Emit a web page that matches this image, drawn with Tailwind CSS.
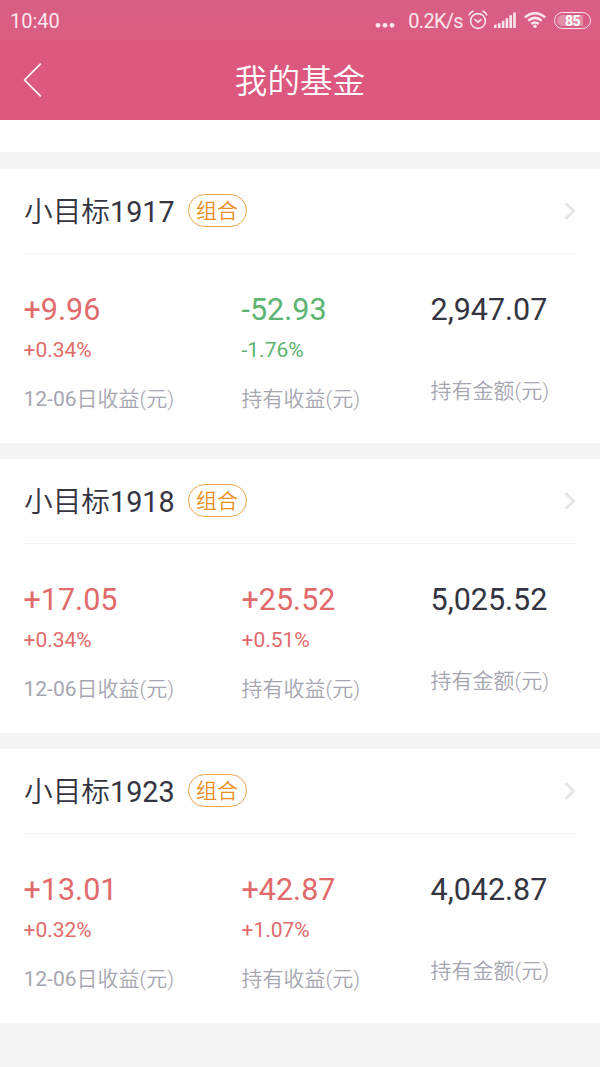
<!DOCTYPE html>
<html lang="zh-CN">
<head>
    <meta charset="UTF-8">
    <meta name="viewport" content="width=device-width, initial-scale=1.0">
    <title>我的基金</title>
    <script src="https://cdn.jsdelivr.net/npm/@tailwindcss/browser@4"></script>
</head>
<body class="bg-[#f5f5f5] h-[1067px] overflow-hidden font-[Roboto,'Noto_Sans_CJK_SC',sans-serif] text-[#343541]">
    <header class="h-[120px] bg-[#dc587f] text-white">
        <!-- Status bar -->
        <div class="h-10 bg-linear-to-b from-[#d95f84] to-[#da5c82] flex items-center justify-between pl-[10px] pr-[9px] text-[#fbe6ed]">
            <span class="text-[20px] leading-[40px] pt-[2px]">10:40</span>
            <div class="flex items-center">
                <svg class="w-[20px] h-[40px] mr-[13px]" viewBox="0 0 20 40" fill="currentColor">
                    <circle cx="3" cy="25.3" r="2.4"/><circle cx="10" cy="25.3" r="2.4"/><circle cx="17" cy="25.3" r="2.4"/>
                </svg>
                <span class="text-[20px] leading-[40px] pt-[2px] mr-[5px] tracking-[-0.7px]">0.2K/s</span>
                <svg class="w-[20px] h-[20px] mr-[6px]" viewBox="0 0 20 20" fill="none" stroke="currentColor" stroke-width="1.6" stroke-linecap="round">
                    <circle cx="10" cy="11" r="7.4"/>
                    <path d="M7 9.6l3 2.6 3-2.6M1.3 4.8Q2.3 2.4 5 1.3M18.7 4.8Q17.7 2.4 15 1.3"/>
                </svg>
                <svg class="w-[22px] h-[16px] mr-[8px]" viewBox="0 0 22 16" fill="currentColor">
                    <path d="M0 13.2L2.6 12v4H0zM4 11.3h2.6V16H4zM7.8 8.8h2.6V16H7.8zM11.6 6.2h2.6V16h-2.6zM15.4 3.3H18V16h-2.6zM19.2.4h2.6V16h-2.6z"/>
                </svg>
                <svg class="w-[22px] h-[16px] mr-[8px]" viewBox="0 0 22 16" fill="none" stroke="currentColor" stroke-width="2.5">
                    <path d="M.8 5.4Q11-3.2 21.2 5.4M4.2 8.8Q11 3 17.8 8.8M7.4 12Q11 9 14.6 12"/>
                    <circle cx="11" cy="14.2" r="1.7" fill="currentColor" stroke="none"/>
                </svg>
                <div class="w-[37px] h-[17px] rounded-full border-[1.5px] border-current p-[2px]">
                    <div class="h-full rounded-full bg-linear-to-r from-white/30 from-85% to-transparent to-85% text-white text-[14px] font-bold leading-[12px] text-center tracking-[-0.5px]">85</div>
                </div>
            </div>
        </div>
        <!-- Title bar -->
        <div class="h-20 grid grid-cols-[60px_1fr_60px] items-center">
            <svg class="w-[20px] h-[34px] ml-[23px]" viewBox="0 0 20 34" fill="none" stroke="#fff" stroke-width="1.7" stroke-linecap="round" stroke-linejoin="round">
                <path d="M17.3 1.2L1.5 17l15.8 15.8"/>
            </svg>
            <h1 class="text-center text-[32.6px] leading-[76px] pt-1 font-[350]">我的基金</h1>
        </div>
    </header>

    <div class="h-8 bg-white"></div>

    <main class="pt-[17px] flex flex-col gap-4">
        <section class="h-[274px] bg-white px-6">
            <div class="h-[85px] border-b border-[#f3f3f3] flex items-center">
                <h2 class="pt-[2px] text-[28.7px] leading-[40px]"><span class="font-[350]">小目标</span>1917</h2>
                <span class="ml-[13px] mb-px w-[59px] h-[33px] rounded-full border border-[#e9a64a] text-[#ea8f1e] text-[21px] leading-[33px] font-[350] text-center">组合</span>
                <svg class="w-[12px] h-[18px] ml-auto" viewBox="0 0 12 18" fill="none" stroke="#e5e5e5" stroke-width="2.8"><path d="M1.5 1l8 8-8 8"/></svg>
            </div>
            <div class="-ml-[0.5px] pt-[38px] grid grid-cols-[218px_189px_1fr]">
                <div>
                    <p class="text-[30.5px] leading-[36px] text-[#e16a6b]">+9.96</p>
                    <p class="mt-[10px] text-[21px] leading-[24px] text-[#e16a6b]">+0.34%</p>
                    <p class="mt-[23px] text-[21px] leading-[28px] text-[#a5a6b1]">12-06<span class="font-[350]">日收益(元)</span></p>
                </div>
                <div>
                    <p class="text-[30.5px] leading-[36px] text-[#5bb470]">-52.93</p>
                    <p class="mt-[10px] text-[21px] leading-[24px] text-[#5bb470]">-1.76%</p>
                    <p class="mt-[23px] text-[21px] leading-[28px] text-[#a5a6b1] font-[350]">持有收益(元)</p>
                </div>
                <div>
                    <p class="text-[30.5px] leading-[36px]">2,947.07</p>
                    <p class="mt-[49px] text-[21px] leading-[28px] text-[#a5a6b1] font-[350]">持有金额(元)</p>
                </div>
            </div>
        </section>

        <section class="h-[274px] bg-white px-6">
            <div class="h-[85px] border-b border-[#f3f3f3] flex items-center">
                <h2 class="pt-[2px] text-[28.7px] leading-[40px]"><span class="font-[350]">小目标</span>1918</h2>
                <span class="ml-[13px] mb-px w-[59px] h-[33px] rounded-full border border-[#e9a64a] text-[#ea8f1e] text-[21px] leading-[33px] font-[350] text-center">组合</span>
                <svg class="w-[12px] h-[18px] ml-auto" viewBox="0 0 12 18" fill="none" stroke="#e5e5e5" stroke-width="2.8"><path d="M1.5 1l8 8-8 8"/></svg>
            </div>
            <div class="-ml-[0.5px] pt-[38px] grid grid-cols-[218px_189px_1fr]">
                <div>
                    <p class="text-[30.5px] leading-[36px] text-[#e16a6b]">+17.05</p>
                    <p class="mt-[10px] text-[21px] leading-[24px] text-[#e16a6b]">+0.34%</p>
                    <p class="mt-[23px] text-[21px] leading-[28px] text-[#a5a6b1]">12-06<span class="font-[350]">日收益(元)</span></p>
                </div>
                <div>
                    <p class="text-[30.5px] leading-[36px] text-[#e16a6b]">+25.52</p>
                    <p class="mt-[10px] text-[21px] leading-[24px] text-[#e16a6b]">+0.51%</p>
                    <p class="mt-[23px] text-[21px] leading-[28px] text-[#a5a6b1] font-[350]">持有收益(元)</p>
                </div>
                <div>
                    <p class="text-[30.5px] leading-[36px]">5,025.52</p>
                    <p class="mt-[49px] text-[21px] leading-[28px] text-[#a5a6b1] font-[350]">持有金额(元)</p>
                </div>
            </div>
        </section>

        <section class="h-[274px] bg-white px-6">
            <div class="h-[85px] border-b border-[#f3f3f3] flex items-center">
                <h2 class="pt-[2px] text-[28.7px] leading-[40px]"><span class="font-[350]">小目标</span>1923</h2>
                <span class="ml-[13px] mb-px w-[59px] h-[33px] rounded-full border border-[#e9a64a] text-[#ea8f1e] text-[21px] leading-[33px] font-[350] text-center">组合</span>
                <svg class="w-[12px] h-[18px] ml-auto" viewBox="0 0 12 18" fill="none" stroke="#e5e5e5" stroke-width="2.8"><path d="M1.5 1l8 8-8 8"/></svg>
            </div>
            <div class="-ml-[0.5px] pt-[38px] grid grid-cols-[218px_189px_1fr]">
                <div>
                    <p class="text-[30.5px] leading-[36px] text-[#e16a6b]">+13.01</p>
                    <p class="mt-[10px] text-[21px] leading-[24px] text-[#e16a6b]">+0.32%</p>
                    <p class="mt-[23px] text-[21px] leading-[28px] text-[#a5a6b1]">12-06<span class="font-[350]">日收益(元)</span></p>
                </div>
                <div>
                    <p class="text-[30.5px] leading-[36px] text-[#e16a6b]">+42.87</p>
                    <p class="mt-[10px] text-[21px] leading-[24px] text-[#e16a6b]">+1.07%</p>
                    <p class="mt-[23px] text-[21px] leading-[28px] text-[#a5a6b1] font-[350]">持有收益(元)</p>
                </div>
                <div>
                    <p class="text-[30.5px] leading-[36px]">4,042.87</p>
                    <p class="mt-[49px] text-[21px] leading-[28px] text-[#a5a6b1] font-[350]">持有金额(元)</p>
                </div>
            </div>
        </section>
    </main>
</body>
</html>
